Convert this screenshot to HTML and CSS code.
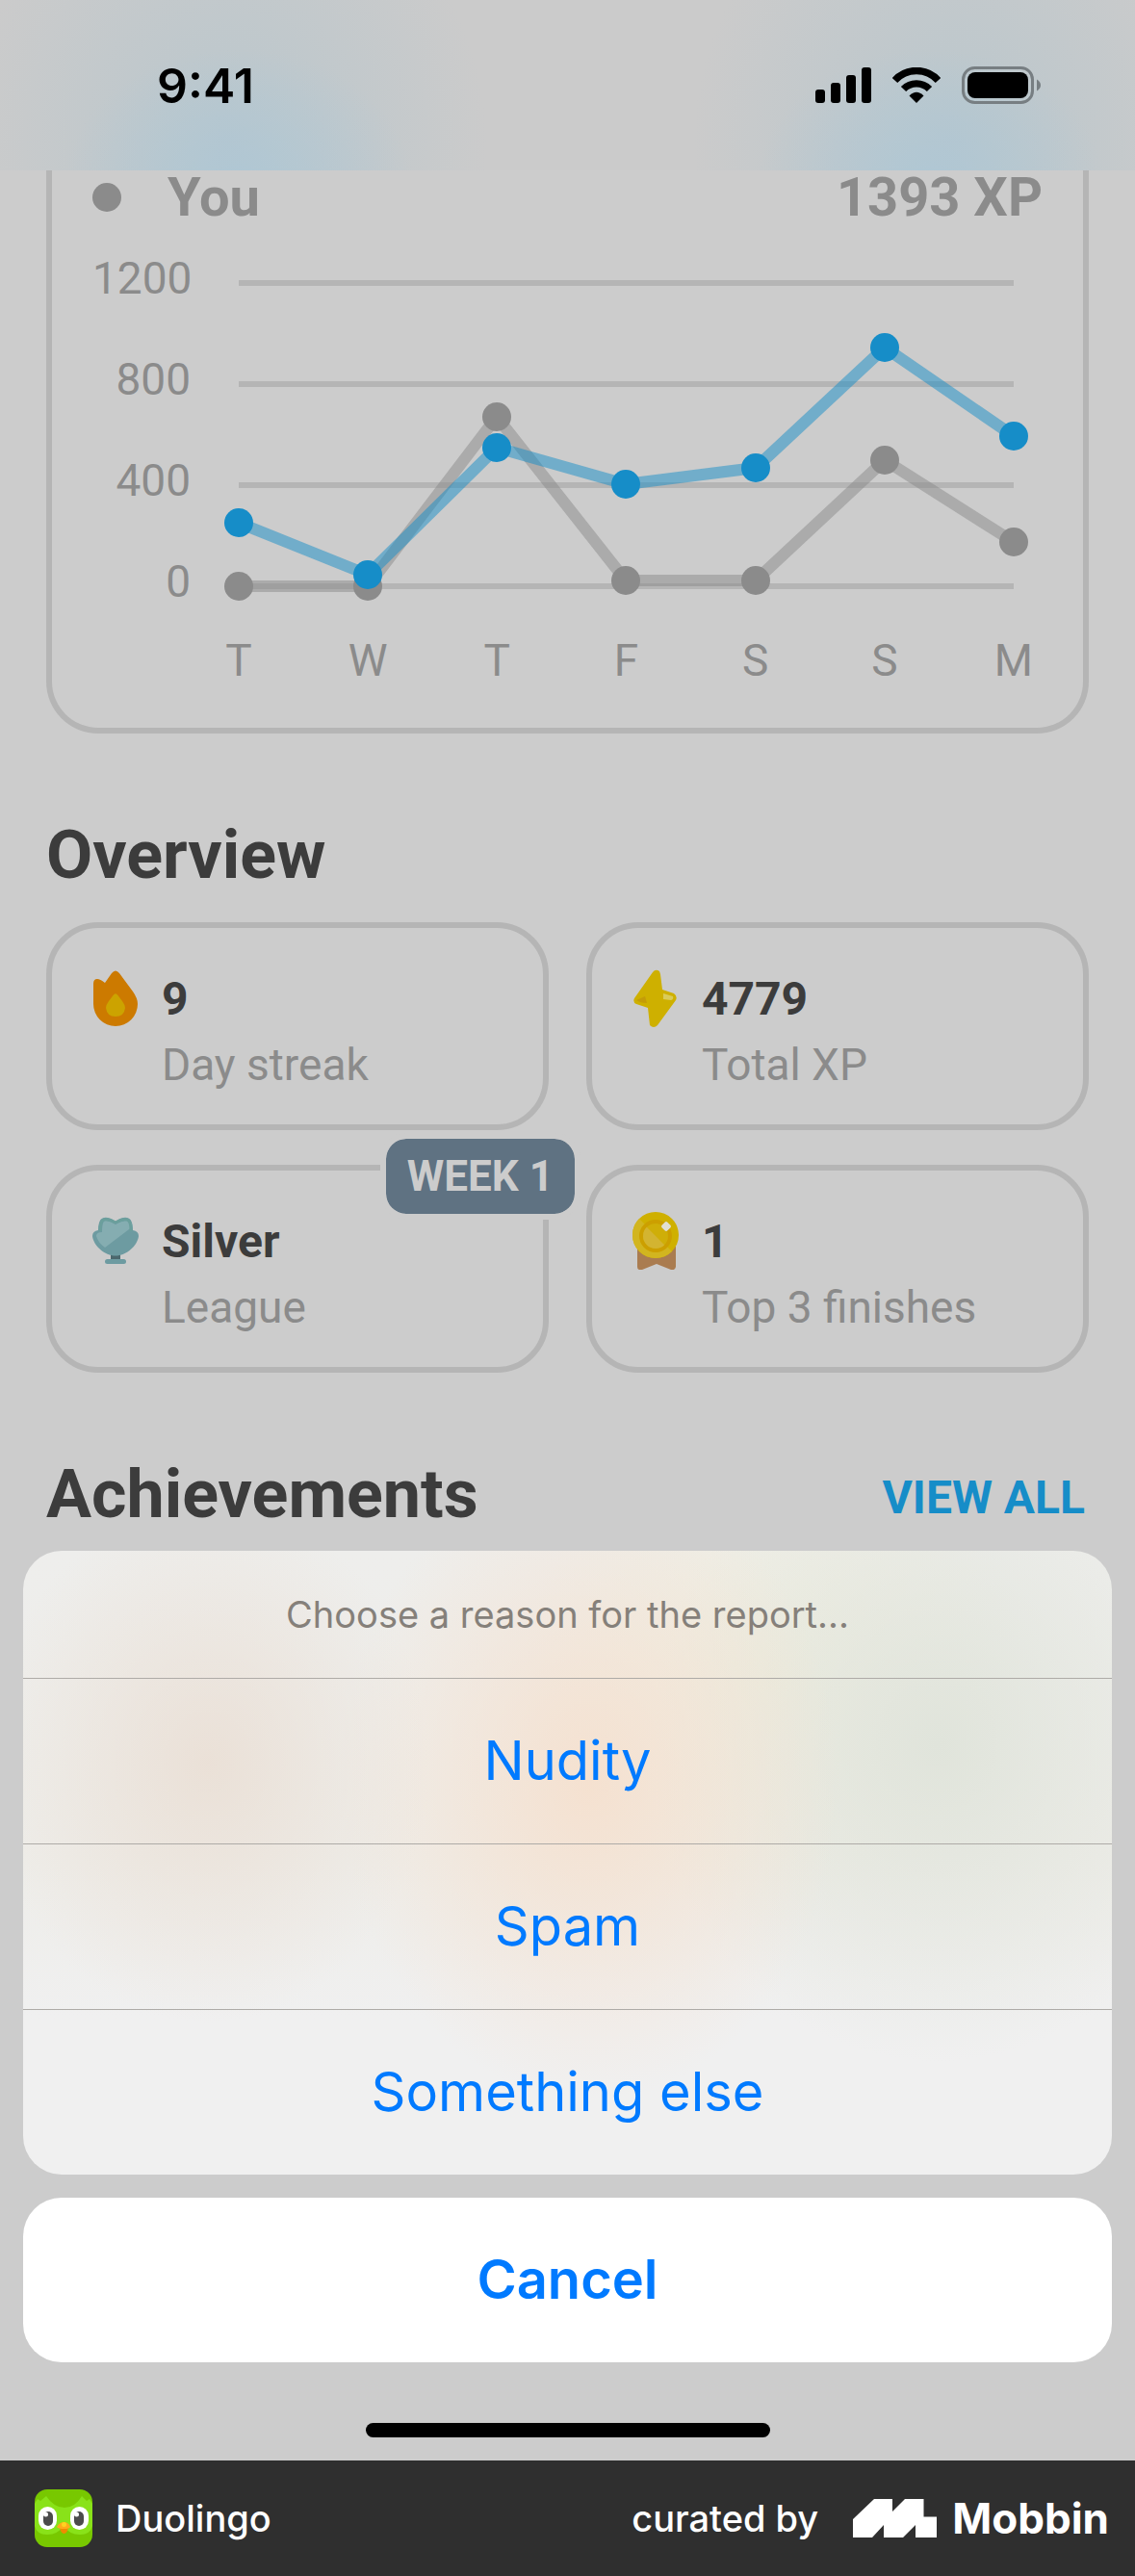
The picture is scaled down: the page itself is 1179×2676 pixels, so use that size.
FILE: index.html
```html
<!DOCTYPE html>
<html lang="en">
<head>
<meta charset="utf-8">
<meta name="viewport" content="width=device-width, initial-scale=1">
<title>Duolingo profile report</title>
<link rel="stylesheet" href="styles.css">
</head>
<body>
<header class="status-bar">
  <time class="status-time">9:41</time>
  <div class="status-icons">
    <svg class="signal" width="58" height="38" viewBox="0 0 58 38" aria-hidden="true">
      <rect x="0" y="23" width="10" height="14" rx="3"/><rect x="16" y="16" width="10" height="21" rx="3"/><rect x="32" y="8" width="10" height="29" rx="3"/><rect x="48" y="0" width="10" height="37" rx="3"/>
    </svg>
    <svg class="wifi" width="50" height="38" viewBox="0 0 50 38" aria-hidden="true">
      <path d="M2.5 13.5A30.3 30.3 0 0 1 47.5 13.5" fill="none" stroke="#000" stroke-width="7.4"/>
      <path d="M11.5 22.5A19 19 0 0 1 38.5 22.5" fill="none" stroke="#000" stroke-width="7.4"/>
      <path d="M17.5 29.5Q25 22 32.500 29.500L25 37Z"/>
    </svg>
    <svg class="battery" width="82" height="40" viewBox="0 0 82 40" aria-hidden="true">
      <rect x="1.500" y="1.500" width="72" height="36" rx="12" fill="none" stroke="#777e82" stroke-width="3"/>
      <rect x="6" y="6" width="63" height="27" rx="8"/>
      <path d="M78 13.500Q82 16 82 19.500Q82 23 78 25.500Z" fill="#777e82"/>
    </svg>
  </div>
</header>

<main class="profile">
  <section class="chart-card" aria-label="XP progress">
    <div class="legend">
      <span class="legend-dot"></span>
      <span class="legend-name">You</span>
      <span class="legend-value">1393 XP</span>
    </div>
    <div class="chart">
      <div class="y-axis"><span>1200</span><span>800</span><span>400</span><span>0</span></div>
      <div class="plot">
        <svg class="plot-lines" viewBox="0 0 865 400" aria-hidden="true">
          <g stroke="#b5b5b5" stroke-width="6"><path d="M30 61H835M30 166H835M30 271H835M30 376H835"/></g>
          <polyline points="30,376 164,376 298,200 432,370 567,370 701,245 835,330" fill="none" stroke="#8a8a8a" stroke-opacity=".5" stroke-width="12" stroke-linejoin="round"/>
          <g fill="#8b8b8b"><circle cx="30" cy="376" r="15"/><circle cx="164" cy="376" r="15"/><circle cx="298" cy="200" r="15"/><circle cx="432" cy="370" r="15"/><circle cx="567" cy="370" r="15"/><circle cx="701" cy="245" r="15"/><circle cx="835" cy="330" r="15"/></g>
          <polyline points="30,310 164,364 298,232 432,270 567,253 701,128 835,220" fill="none" stroke="#168dc8" stroke-opacity=".5" stroke-width="12" stroke-linejoin="round"/>
          <g fill="#168dc8"><circle cx="30" cy="310" r="15"/><circle cx="164" cy="364" r="15"/><circle cx="298" cy="232" r="15"/><circle cx="432" cy="270" r="15"/><circle cx="567" cy="253" r="15"/><circle cx="701" cy="128" r="15"/><circle cx="835" cy="220" r="15"/></g>
        </svg>
        <div class="x-axis"><span>T</span><span>W</span><span>T</span><span>F</span><span>S</span><span>S</span><span>M</span></div>
      </div>
    </div>
  </section>

  <div class="section-head"><h2>Overview</h2></div>
  <section class="stats">
    <article class="stat">
      <svg class="stat-icon" viewBox="0 0 48 60" aria-hidden="true">
        <path d="M1 15Q1 10 5 10Q8 10 13 14L20 4Q24 -1 28 4L42 23Q47 30 47 36A23 23 0 0 1 1 36Z" fill="#cc7a00"/>
        <path d="M21.500 27Q24 23.500 26.500 27L31 33Q34 37 34 40Q33 49 24 49Q15 49 14 40Q14 37 17 33Z" fill="#cca300"/>
      </svg>
      <div class="stat-text"><strong>9</strong><span>Day streak</span></div>
    </article>
    <article class="stat">
      <svg class="stat-icon" viewBox="0 0 48 60" aria-hidden="true">
        <path d="M21 3Q24 -1 28 2L29 5L31 21L43 25Q47 28 45 32L26 58Q22 62 18 58L16 40L4 36Q0 34 2 30Z" fill="#ceb000"/>
        <path d="M32 25L42 28Q43 31 40 32L32 31Z" fill="#dacb5a"/>
        <path d="M4 32L13 28L15 35Q8 35 4 32Z" fill="#c49c08"/>
      </svg>
      <div class="stat-text"><strong>4779</strong><span>Total XP</span></div>
    </article>
    <article class="stat">
      <svg class="stat-icon" viewBox="0 0 48 60" aria-hidden="true">
        <path d="M19 44H29V50H19Z" fill="#4b676d"/>
        <rect x="13" y="49" width="22" height="5" rx="2.500" fill="#6d9ba1"/>
        <path d="M24 10Q17 5 12 6Q6 7 6 19Q0 20 0 25C1 35 13 45.500 24 45.500S47 35 48 25Q48 20 42 19Q42 7 36 6Q31 5 24 10Z" fill="#6d9ba1"/>
        <path d="M24 13Q17 9 13 9Q10 10 10 21Q4 21 4 25Q6 32 13 37L42 15Q41 10 36 9Q31 9 24 13Z" fill="#85adb1"/>
        <path d="M24 11Q17 7 12 8Q8 9 8 20M24 11Q31 7 36 8Q40 9 40 20" fill="none" stroke="#6b9f9c" stroke-width="3"/>
      </svg>
      <div class="stat-text"><strong>Silver</strong><span>League</span></div>
      <span class="badge">WEEK 1</span>
    </article>
    <article class="stat">
      <svg class="stat-icon" viewBox="0 0 48 60" aria-hidden="true">
        <path d="M5 36H45V57Q44 61 40 60L25 54L10 60Q5 61 5 57Z" fill="#aa7c50"/>
        <circle cx="24" cy="24" r="24" fill="#cfb000"/>
        <path d="M7 7A24 24 0 0 0 41 41Z" fill="#d2b51f"/>
        <circle cx="24" cy="25" r="17" fill="#cc9f00"/>
        <circle cx="24" cy="25" r="13" fill="#cfae08"/>
        <path d="M14.800 15.800A13 13 0 0 0 33.200 34.200Z" fill="#d3b431"/>
        <rect x="31" y="11" width="8" height="8" rx="2" transform="rotate(45 35 15)" fill="#e1dfd2"/>
      </svg>
      <div class="stat-text"><strong>1</strong><span>Top 3 finishes</span></div>
    </article>
  </section>

  <div class="section-head"><h2>Achievements</h2><a href="#achievements">VIEW ALL</a></div>
</main>

<section class="action-sheet" role="dialog" aria-labelledby="sheet-title">
  <div class="sheet-group">
    <p class="sheet-title" id="sheet-title">Choose a reason for the report...</p>
    <button type="button" class="sheet-option">Nudity</button>
    <button type="button" class="sheet-option">Spam</button>
    <button type="button" class="sheet-option">Something else</button>
  </div>
  <button type="button" class="sheet-cancel">Cancel</button>
  <div class="home-indicator"></div>
</section>

<footer class="credit">
  <svg width="60" height="60" viewBox="0 0 60 60" aria-hidden="true">
    <rect width="60" height="60" rx="13" fill="#78c800"/>
    <path d="M0 15L3 10L6 12L12 7Q20 19 31 19Q42 19 49 7L54 12L57 10L60 15V38Q58 47 47 47Q36 47 30 38Q24 47 13 47Q2 47 0 38Z" fill="#89e219"/>
    <rect x="4" y="18" width="19" height="24" rx="9.500" fill="#fff"/><rect x="37" y="18" width="19" height="24" rx="9.500" fill="#fff"/>
    <rect x="9" y="23" width="10" height="15" rx="5" fill="#4b4b4b"/><rect x="41" y="23" width="10" height="15" rx="5" fill="#4b4b4b"/>
    <circle cx="11.500" cy="26" r="2.500" fill="#fff"/><circle cx="43.500" cy="26" r="2.500" fill="#fff"/>
    <path d="M26 39H35Q34 46 30.500 46Q27 46 26 39Z" fill="#f08a00"/>
    <path d="M23 39Q26 34 30.500 34Q35 34 37 39Q36 41 30.500 41Q25 41 23 39Z" fill="#ffab1a"/>
    <circle cx="30.500" cy="36.500" r="2.500" fill="#ffd21f"/>
  </svg>
  <span class="credit-app">Duolingo</span>
  <span class="credit-by">curated by</span>
  <svg width="87" height="40" viewBox="0 0 87 40" aria-hidden="true">
    <path d="M0 21L22 0H41V13L54 0H73.500V18.500H87V40H65V27L52 40H32V27L20 40H0Z" fill="#fff"/>
  </svg>
  <strong class="credit-brand">Mobbin</strong>
</footer>
</body>
</html>
```

FILE: styles.css
```css
* { box-sizing: border-box; }

body {
  margin: 0;
  background: #ccc;
  color: #3c3c3c;
  font-family: Roboto, "Liberation Sans", sans-serif;
}

h2, p { margin: 0; }
button { border: 0; padding: 0; cursor: pointer; }
svg { display: block; flex: none; }

/* Status bar */
.status-bar {
  display: flex;
  align-items: center;
  justify-content: space-between;
  height: 177px;
  padding: 0 98px 0 163px;
  background:
    radial-gradient(180px 140px at 21% 108%, rgba(174, 199, 213, 0.9), rgba(178, 199, 211, 0)),
    radial-gradient(180px 140px at 82% 108%, rgba(174, 199, 213, 0.9), rgba(178, 199, 211, 0)),
    radial-gradient(270px 300px at 20% 85%, rgba(183, 198, 205, 0.9), rgba(192, 200, 204, 0)),
    radial-gradient(270px 300px at 84% 85%, rgba(183, 198, 205, 0.9), rgba(192, 200, 204, 0)),
    #cbcbcb;
  color: #000;
}
.status-time { font: 600 50px/60px Inter, sans-serif; }
.status-icons { display: flex; align-items: center; gap: 22px; }

/* Profile */
.profile { padding: 0 48px; }

.chart-card {
  padding: 0 42px 40px;
  border: 6px solid #b5b5b5;
  border-top: 0;
  border-radius: 0 0 54px 54px;
  color: #8b8b8b;
}
.legend {
  display: flex;
  align-items: center;
  height: 56px;
  font-size: 56px;
  font-weight: 700;
}
.legend-dot { width: 30px; height: 30px; border-radius: 50%; background: #8b8b8b; }
.legend-name { margin-left: 48px; }
.legend-value { margin-left: auto; }

.chart { display: flex; gap: 20px; font-size: 46px; line-height: 60px; }
.y-axis {
  display: flex;
  flex-direction: column;
  gap: 45px;
  width: 102px;
  padding-top: 26px;
  text-align: right;
}
.plot { flex: 1; }
.plot-lines { width: 100%; }
.x-axis { display: flex; justify-content: space-between; margin-top: 23px; }
.x-axis span { width: 60px; text-align: center; }

.section-head {
  display: flex;
  align-items: flex-end;
  justify-content: space-between;
  margin-top: 84px;
}
.section-head h2 { font-size: 70px; line-height: 84px; font-weight: 700; }
.section-head a {
  padding-right: 4px;
  color: #168dc8;
  font-size: 48px;
  font-weight: 700;
  line-height: 76px;
  text-decoration: none;
}

.stats {
  display: grid;
  grid-template-columns: 1fr 1fr;
  gap: 36px 39px;
  margin-top: 28px;
}
.stat {
  position: relative;
  display: flex;
  gap: 24px;
  padding: 40px 42px 28px;
  border: 6px solid #b5b5b5;
  border-radius: 54px;
}
.stat-icon { width: 48px; height: 60px; margin-top: 3px; }
.stat-text { display: flex; flex-direction: column; line-height: 68px; }
.stat-text strong { font-size: 48px; font-weight: 700; }
.stat-text span { font-size: 46px; color: #8b8b8b; }
.badge {
  position: absolute;
  top: -39px;
  right: -39px;
  padding: 0 22px;
  border: 6px solid #ccc;
  border-radius: 27px;
  background: #5f7282;
  background-clip: padding-box;
  color: #ccc;
  font-size: 44px;
  font-weight: 700;
  line-height: 78px;
}

/* Action sheet */
.action-sheet {
  display: flex;
  flex-direction: column;
  gap: 24px;
  margin-top: 17px;
  padding: 0 24px 24px;
  font-family: Inter, sans-serif;
}
.sheet-group {
  display: flex;
  flex-direction: column;
  overflow: hidden;
  border-radius: 40px;
  background:
    radial-gradient(230px 270px at 17% 34%, rgba(234, 223, 213, 0.9), rgba(236, 226, 220, 0)),
    radial-gradient(260px 330px at 52% 37%, rgba(245, 225, 208, 1), rgba(245, 228, 214, 0)),
    radial-gradient(300px 330px at 84% 31%, rgba(224, 228, 219, 1), rgba(228, 232, 222, 0)),
    radial-gradient(260px 260px at 69% 20%, rgba(239, 238, 222, 0.9), rgba(239, 238, 222, 0)),
    linear-gradient(#eeeeec 0%, #eeede9 50%, #f0f0f0 75%);
}
.sheet-title {
  color: #85807a;
  font-size: 38px;
  line-height: 132px;
  text-align: center;
}
.sheet-option, .sheet-cancel {
  color: #007aff;
  font-family: inherit;
  font-size: 56px;
  line-height: 171px;
}
.sheet-option { border-top: 1px solid #aeaba7; background: none; }
.sheet-cancel { border-radius: 40px; background: #fff; font-weight: 600; }
.home-indicator {
  align-self: center;
  width: 420px;
  height: 15px;
  margin-top: 39px;
  border-radius: 8px;
  background: #000;
}

/* Credit strip */
.credit {
  display: flex;
  align-items: center;
  height: 120px;
  padding: 0 27px 0 36px;
  background: #2f2f2f;
  color: #fff;
  font: 500 38px/48px Inter, sans-serif;
}
.credit-app { margin-left: 24px; }
.credit-by { margin: 0 36px 0 auto; }
.credit-brand { margin-left: 16px; font-size: 44px; font-weight: 700; }
```
